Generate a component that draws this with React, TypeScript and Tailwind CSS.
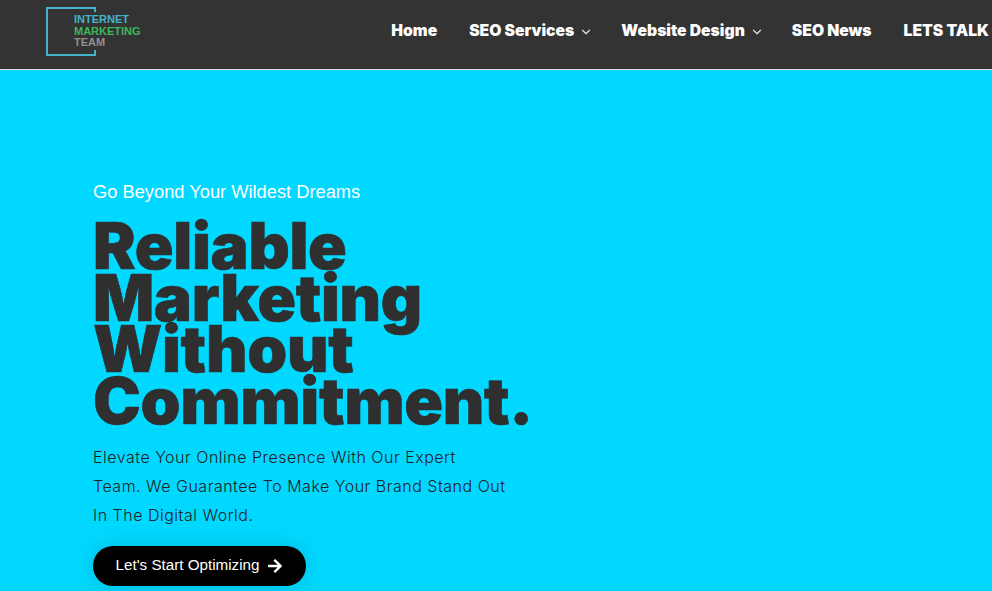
import { ChevronDown } from "lucide-react";
import { FaArrowRight } from "react-icons/fa";

const NAV_ITEMS = [
  { label: "Home", caret: false },
  { label: "SEO Services", caret: true },
  { label: "Website Design", caret: true },
  { label: "SEO News", caret: false },
  { label: "LETS TALK", caret: false },
];

function Logo() {
  return (
    <div className="relative mt-[1px] ml-[46px] h-[50px] w-[100px] shrink-0">
      <svg width="50" height="49" viewBox="0 0 50 49" className="block" fill="none">
        <path d="M49 5V1H1V48H49V43" stroke="#45b3cb" strokeWidth="2" />
      </svg>
      <div className="absolute left-[28px] top-[7px] font-['Liberation_Sans',sans-serif] text-[11px] leading-[11.7px] font-bold">
        <p className="text-[#45b3cb]">INTERNET</p>
        <p className="text-[#3fb75c]">MARKETING</p>
        <p className="text-[#909090]">TEAM</p>
      </div>
    </div>
  );
}

export default function App() {
  return (
    <div className="h-[591px] w-[992px] overflow-hidden bg-[#00d8ff]">
      <header className="flex h-[70px] items-start justify-between overflow-hidden border-b border-[#dcdcdc] bg-[#333333] pt-[6px]">
        <Logo />
        <nav className="flex shrink-0 items-center gap-[32px] whitespace-nowrap pt-[15px] pr-[3px] font-['Inter',sans-serif] text-[15.7px] leading-[20px] font-black text-white">
          {NAV_ITEMS.map((item) => (
            <span key={item.label} className="flex items-center gap-[5px]">
              {item.label}
              {item.caret && <ChevronDown size={14} strokeWidth={2} className="mt-[2px] -mr-[4px] text-[#e5e5e5]" />}
            </span>
          ))}
        </nav>
      </header>

      <main className="pt-[110px] pl-[93px]">
        <p className="font-['Liberation_Sans',sans-serif] text-[18.3px] leading-[24px] text-white">
          Go Beyond Your Wildest Dreams
        </p>
        <h1 className="mt-[16px] font-['Inter',sans-serif] text-[64px] leading-[51.7px] font-black tracking-[-0.005em] text-[#2f2f2f] [-webkit-text-stroke:0.6px_#2f2f2f]">
          Reliable
          <br />
          Marketing
          <br />
          Without
          <br />
          Commitment.
        </h1>
        <p className="mt-[16px] w-[430px] font-['Inter',sans-serif] text-[16px] leading-[29px] font-light tracking-[0.5px] text-[#222222]">
          Elevate Your Online Presence With Our Expert
          <br />
          Team. We Guarantee To Make Your Brand Stand Out
          <br />
          In The Digital World.
        </p>
        <a className="mt-[16px] flex h-[40px] w-[213px] items-center justify-center gap-[8px] rounded-full bg-black font-['Liberation_Sans',sans-serif] text-[15.2px] text-white shadow-[0_0_20px_rgba(0,0,0,0.15)]">
          Let's Start Optimizing
          <FaArrowRight size={16} />
        </a>
      </main>
    </div>
  );
}
